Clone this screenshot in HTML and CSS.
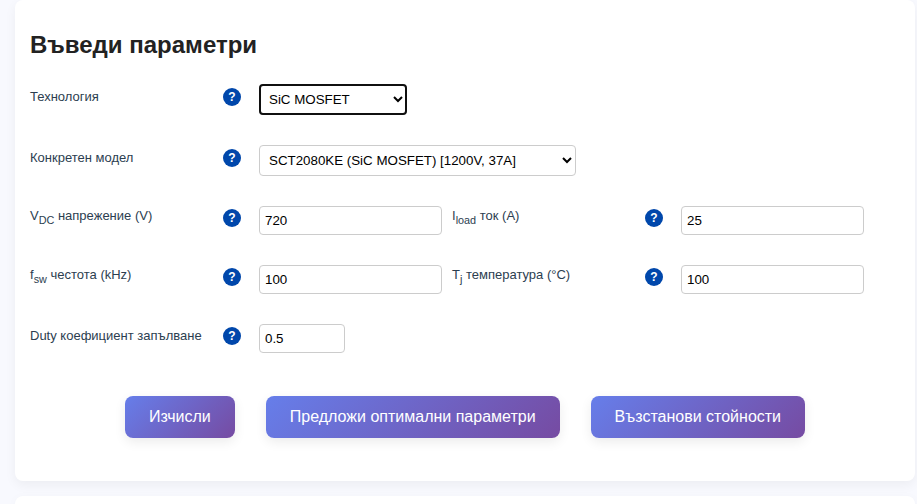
FILE: index.html
```html
<!DOCTYPE html>
<html lang="bg">
<head>
<meta charset="utf-8">
<title>Въведи параметри</title>
<link rel="stylesheet" href="styles.css">
</head>
<body>
<main class="page">
  <section class="card">
    <h2 class="card-title">Въведи параметри</h2>
    <form class="params">
      <div class="row">
        <div class="caption"><label for="tech">Технология</label><button type="button" class="help">?</button></div>
        <select id="tech" class="control tech focused"><option>SiC MOSFET</option></select>
      </div>
      <div class="row">
        <div class="caption"><label for="model">Конкретен модел</label><button type="button" class="help">?</button></div>
        <select id="model" class="control model"><option>SCT2080KE (SiC MOSFET) [1200V, 37A]</option></select>
      </div>
      <div class="row">
        <div class="caption"><label for="vdc">V<sub>DC</sub> напрежение (V)</label><button type="button" class="help">?</button></div>
        <input id="vdc" class="control" type="text" value="720">
        <div class="caption"><label for="iload">I<sub>load</sub> ток (A)</label><button type="button" class="help">?</button></div>
        <input id="iload" class="control" type="text" value="25">
      </div>
      <div class="row">
        <div class="caption"><label for="fsw">f<sub>sw</sub> честота (kHz)</label><button type="button" class="help">?</button></div>
        <input id="fsw" class="control" type="text" value="100">
        <div class="caption"><label for="tj">T<sub>j</sub> температура (°C)</label><button type="button" class="help">?</button></div>
        <input id="tj" class="control" type="text" value="100">
      </div>
      <div class="row">
        <div class="caption"><label for="duty">Duty коефициент запълване</label><button type="button" class="help">?</button></div>
        <input id="duty" class="control short" type="text" value="0.5">
      </div>
      <div class="actions">
        <button type="button" class="action">Изчисли</button>
        <button type="button" class="action">Предложи оптимални параметри</button>
        <button type="button" class="action">Възстанови стойности</button>
      </div>
    </form>
  </section>
  <section class="card results"></section>
</main>
</body>
</html>
```
FILE: styles.css
```css
* {
  box-sizing: border-box;
}

body {
  margin: 0;
  background: #f8f9fe;
  color: #222;
  font-family: "Liberation Sans", Arial, sans-serif;
}

.page {
  display: flex;
  flex-direction: column;
  gap: 15px;
  min-height: 100vh;
  padding: 0 2px 0 15px;
}

.card {
  padding: 30px 15px 43px;
  background: #fff;
  border-radius: 8px;
  box-shadow: 0 4px 12px rgba(0, 0, 0, 0.05);
}

.results {
  flex: 1;
  padding: 0;
  border-radius: 8px 8px 0 0;
}

.card-title {
  margin: 0 0 24px;
  font-size: 24px;
  line-height: 30px;
}

.params {
  display: flex;
  flex-direction: column;
  gap: 30px;
}

.row {
  display: flex;
  align-items: center;
}

.caption {
  display: flex;
  align-items: center;
  justify-content: space-between;
  flex: 0 0 211px;
  height: 18px;
  margin: 0 18px 5px 0;
  color: #2c3e50;
  font-size: 13px;
  line-height: 16px;
}

label {
  padding-bottom: 1px;
}

.help {
  width: 18px;
  height: 18px;
  padding: 0;
  border: 0;
  border-radius: 50%;
  background: #0047ab;
  color: #fff;
  font: bold 12px/18px "Liberation Sans", Arial, sans-serif;
}

.control {
  width: 183px;
  height: 29px;
  margin-right: 10px;
  padding: 5px;
  border: 1px solid #ccc;
  border-radius: 4px;
  background: #fff;
  color: #000;
  font-family: "Liberation Sans", Arial, sans-serif;
}

select.control {
  height: 31px;
}

.tech.control {
  width: 148px;
}

.model.control {
  width: 317px;
}

.short.control {
  width: 86px;
}

.focused {
  outline: 2px solid #101010;
  outline-offset: -2px;
}

.actions {
  display: flex;
  justify-content: center;
  gap: 31px;
  margin-top: 13px;
}

.action {
  height: 42px;
  padding: 0 24px;
  border: 0;
  border-radius: 8px;
  background: linear-gradient(135deg, #667eea, #764ba2);
  box-shadow: 0 4px 12px rgba(0, 0, 0, 0.08);
  color: #fff;
  font: 16px "Liberation Sans", Arial, sans-serif;
}
```
